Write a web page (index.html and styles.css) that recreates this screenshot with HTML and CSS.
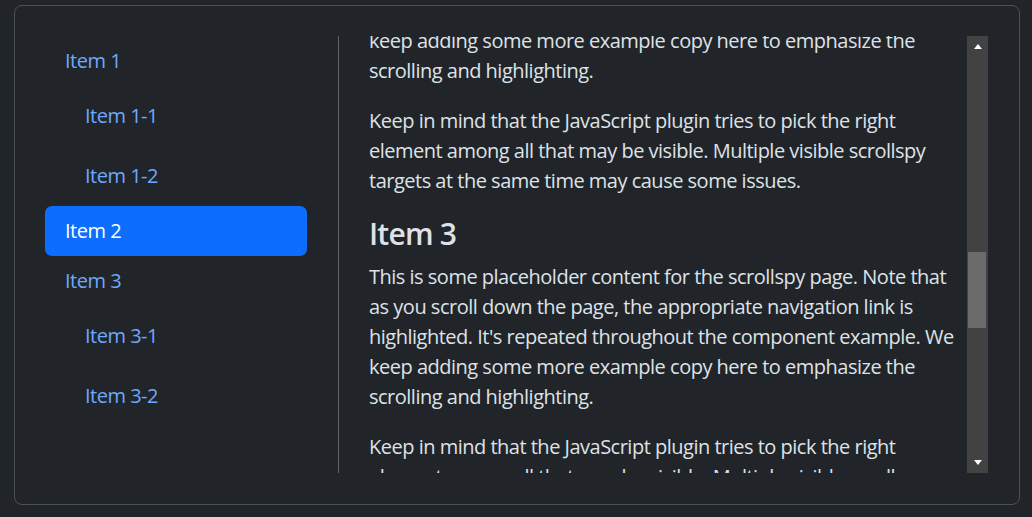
FILE: index.html
```html
<!DOCTYPE html>
<html lang="en">
<head>
<meta charset="utf-8">
<title>Scrollspy</title>
<link rel="stylesheet" href="styles.css">
</head>
<body>
<div class="card">
  <nav class="nav-col">
    <a class="nav-link" href="#item-1">Item 1</a>
    <nav class="sub-nav">
      <a class="nav-link" href="#item-1-1">Item 1-1</a>
      <a class="nav-link" href="#item-1-2">Item 1-2</a>
    </nav>
    <a class="nav-link active" href="#item-2">Item 2</a>
    <a class="nav-link" href="#item-3">Item 3</a>
    <nav class="sub-nav">
      <a class="nav-link" href="#item-3-1">Item 3-1</a>
      <a class="nav-link" href="#item-3-2">Item 3-2</a>
    </nav>
  </nav>
  <div class="content-col">
    <div class="viewport">
      <div class="scroll-content">
        <p>This is some placeholder content for the scrollspy page. Note that<br>as you scroll down the page, the appropriate navigation link is<br>highlighted. It's repeated throughout the component example. We<br>keep adding some more example copy here to emphasize the<br>scrolling and highlighting.</p>
        <p>Keep in mind that the JavaScript plugin tries to pick the right<br>element among all that may be visible. Multiple visible scrollspy<br>targets at the same time may cause some issues.</p>
        <h4 id="item-3">Item 3</h4>
        <p>This is some placeholder content for the scrollspy page. Note that<br>as you scroll down the page, the appropriate navigation link is<br>highlighted. It's repeated throughout the component example. We<br>keep adding some more example copy here to emphasize the<br>scrolling and highlighting.</p>
        <p>Keep in mind that the JavaScript plugin tries to pick the right<br>element among all that may be visible. Multiple visible scrollspy<br>targets at the same time may cause some issues.</p>
      </div>
    </div>
    <div class="scrollbar">
      <div class="sb-btn"><span class="arrow-up"></span></div>
      <div class="sb-track"><div class="sb-thumb"></div></div>
      <div class="sb-btn"><span class="arrow-down"></span></div>
    </div>
  </div>
</div>
</body>
</html>
```
FILE: styles.css
```css
html, body {
  margin: 0;
  padding: 0;
  background: #212529;
}
body {
  font-family: "Open Sans", "Noto Sans", sans-serif;
  font-size: 20px;
  line-height: 30px;
  letter-spacing: -0.5px;
  color: #dee2e6;
}
.card {
  box-sizing: border-box;
  width: 1006px;
  height: 500px;
  margin: 5px 0 0 14px;
  border: 1px solid #495057;
  border-radius: 8px;
  padding: 30px 31px 31px 30px;
  display: flex;
}
.nav-col {
  width: 262px;
  margin-right: 31px;
  display: flex;
  flex-direction: column;
}
.nav-link {
  display: block;
  padding: 10px 20px;
  color: #6ea8fe;
  text-decoration: none;
  border-radius: 7px;
}
.nav-link.active {
  background: #0d6efd;
  color: #fff;
}
.sub-nav {
  display: flex;
  flex-direction: column;
}
.sub-nav .nav-link {
  margin: 5px 0 5px 20px;
}
.content-col {
  flex: 1;
  display: flex;
  border-left: 1px solid #5c6166;
  padding-left: 30px;
}
.viewport {
  flex: 1;
  overflow: hidden;
  height: 437px;
}
.scroll-content {
  margin-top: -100px;
  white-space: nowrap;
}
.scroll-content p {
  margin: 0 0 20px;
}
.scroll-content h4 {
  margin: 0 0 10px;
  font-size: 30px;
  line-height: 36px;
  font-weight: 600;
  letter-spacing: -0.8px;
}
.scrollbar {
  width: 21px;
  background: #424242;
  display: flex;
  flex-direction: column;
}
.sb-btn {
  height: 21px;
  display: flex;
  align-items: center;
  justify-content: center;
}
.arrow-up {
  width: 0;
  height: 0;
  border-left: 4.5px solid transparent;
  border-right: 4.5px solid transparent;
  border-bottom: 5px solid #fff;
}
.arrow-down {
  width: 0;
  height: 0;
  border-left: 4.5px solid transparent;
  border-right: 4.5px solid transparent;
  border-top: 5px solid #fff;
}
.sb-track {
  flex: 1;
}
.sb-thumb {
  margin: 195px 2px 0 1px;
  height: 76px;
  background: #6b6b6b;
}
```
